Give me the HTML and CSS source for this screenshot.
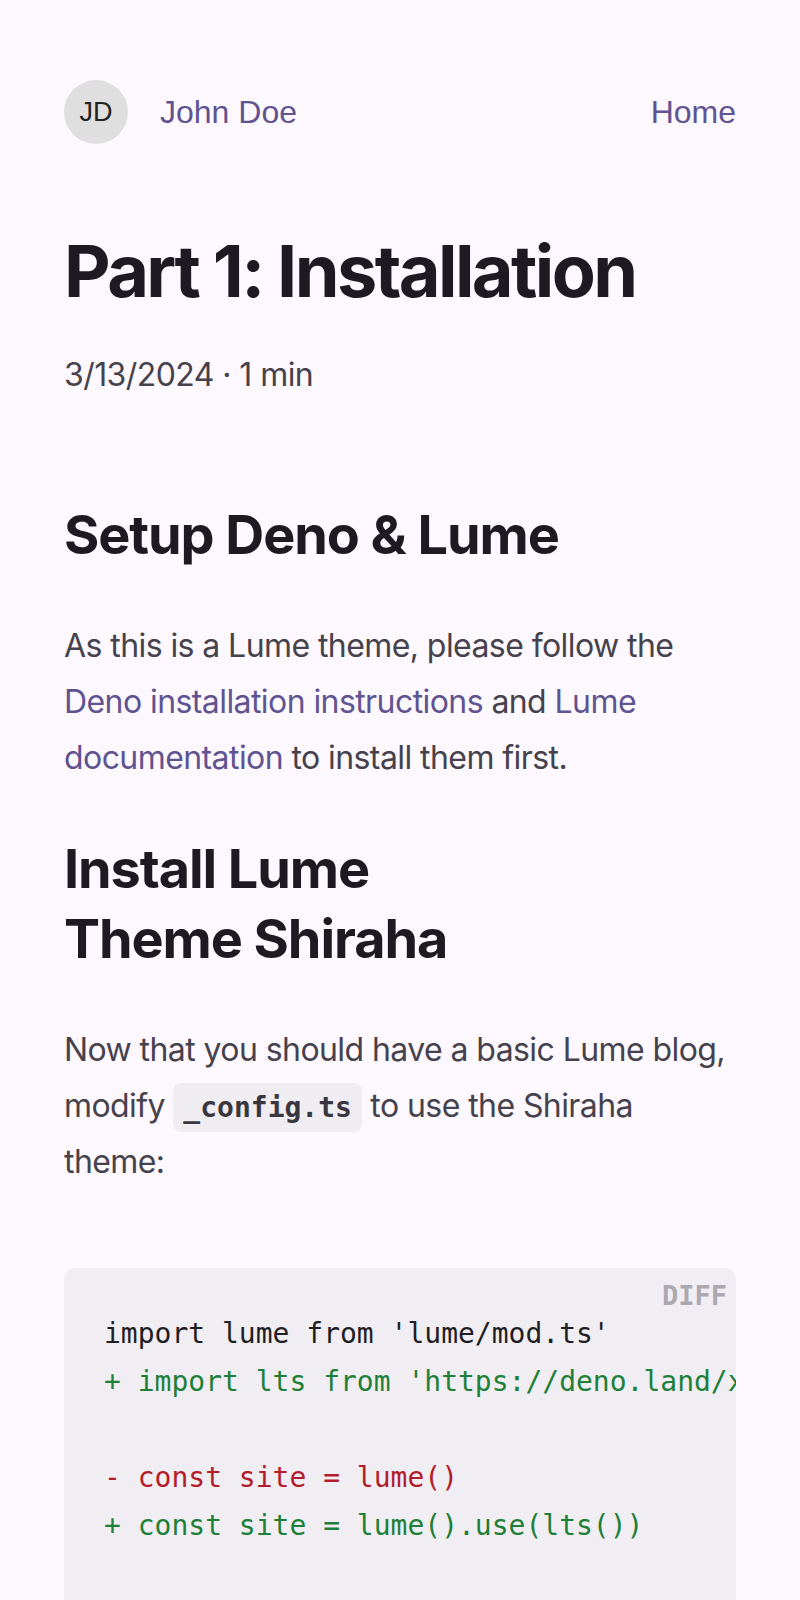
FILE: index.html
```html
<!DOCTYPE html>
<html lang="en">
<head>
<meta charset="utf-8">
<title>Part 1: Installation</title>
<link rel="stylesheet" href="styles.css">
</head>
<body>
<div class="page">
  <header class="site-header">
    <a class="brand" href="#">
      <span class="avatar">JD</span>
      <span class="brand-name">John Doe</span>
    </a>
    <nav class="nav">
      <a class="nav-link" href="#">Home</a>
    </nav>
  </header>
  <main>
    <article class="post">
      <h1 class="post-title">Part 1: Installation</h1>
      <p class="post-meta">3/13/2024 · 1 min</p>
      <h2 class="section-title first">Setup Deno &amp; Lume</h2>
      <p class="text">As this is a Lume theme, please follow the <a class="link" href="#">Deno installation instructions</a> and <a class="link" href="#">Lume documentation</a> to install them first.</p>
      <h2 class="section-title">Install Lume Theme Shiraha</h2>
      <p class="text">Now that you should have a basic Lume blog, modify <code class="inline-code">_config.ts</code> to use the Shiraha theme:</p>
      <div class="code-block">
        <span class="code-lang">DIFF</span>
        <pre class="code-pre"><code><span class="ln">import lume from 'lume/mod.ts'</span>
<span class="ln add">+ import lts from 'https://deno.land/x/lume_theme_shiraha/mod.ts'</span>

<span class="ln del">- const site = lume()</span>
<span class="ln add">+ const site = lume().use(lts())</span>

<span class="ln">export default site</span></code></pre>
      </div>
    </article>
  </main>
</div>
</body>
</html>
```
FILE: styles.css
```css
html, body {
  margin: 0;
  padding: 0;
  background: #fdf8fd;
}

body {
  font-family: Inter, "Noto Sans", sans-serif;
  color: #46424d;
  font-size: 32px;
  line-height: 1.75;
  letter-spacing: -0.018em;
}

.page {
  padding: 80px 64px 0;
}

.site-header {
  display: flex;
  align-items: center;
  justify-content: space-between;
  height: 64px;
  font-family: "Liberation Sans", Arial, sans-serif;
  letter-spacing: 0;
}

.brand {
  display: flex;
  align-items: center;
  gap: 32px;
  text-decoration: none;
}

.avatar {
  width: 64px;
  height: 64px;
  border-radius: 50%;
  background: #e0dfe0;
  color: #222;
  font-size: 27px;
  display: flex;
  align-items: center;
  justify-content: center;
  line-height: 1;
}

.brand-name,
.nav-link {
  color: #5f5491;
  font-size: 32px;
  text-decoration: none;
  line-height: 1;
}

.post-title {
  margin: 84px 0 0;
  font-size: 72px;
  line-height: 1.2;
  font-weight: 700;
  color: #1d1a21;
  letter-spacing: -0.036em;
}

.post-meta {
  margin: 33px 0 0;
  color: #46424d;
}

.section-title {
  margin: 48px 0 0;
  font-size: 54px;
  line-height: 70px;
  font-weight: 700;
  color: #1d1a21;
  text-wrap: balance;
  letter-spacing: -0.02em;
}

.section-title.first {
  margin-top: 97px;
}

.text {
  margin: 48px 0 0;
}

.link {
  color: #5f5491;
  text-decoration: none;
}

.inline-code {
  font-family: "DejaVu Sans Mono", monospace;
  font-weight: 700;
  font-size: 28px;
  letter-spacing: 0;
  background: #f0edf2;
  color: #3a3640;
  border-radius: 8px;
  padding: 8px 10px;
}

.code-block {
  position: relative;
  margin-top: 78px;
  background: #f1eef3;
  border-radius: 12px;
  overflow: hidden;
}

.code-lang {
  position: absolute;
  top: 12px;
  right: 9px;
  font-family: "DejaVu Sans Mono", monospace;
  font-weight: 700;
  font-size: 27px;
  line-height: 1.2;
  letter-spacing: 0;
  color: #aca8b0;
}

.code-pre {
  margin: 0;
  padding: 42px 40px 40px;
  overflow: hidden;
  font-family: "DejaVu Sans Mono", monospace;
  font-size: 28px;
  line-height: 48px;
  letter-spacing: 0;
  color: #1f1e24;
}

.ln.add {
  color: #1e8038;
}

.ln.del {
  color: #b31d2b;
}
```
